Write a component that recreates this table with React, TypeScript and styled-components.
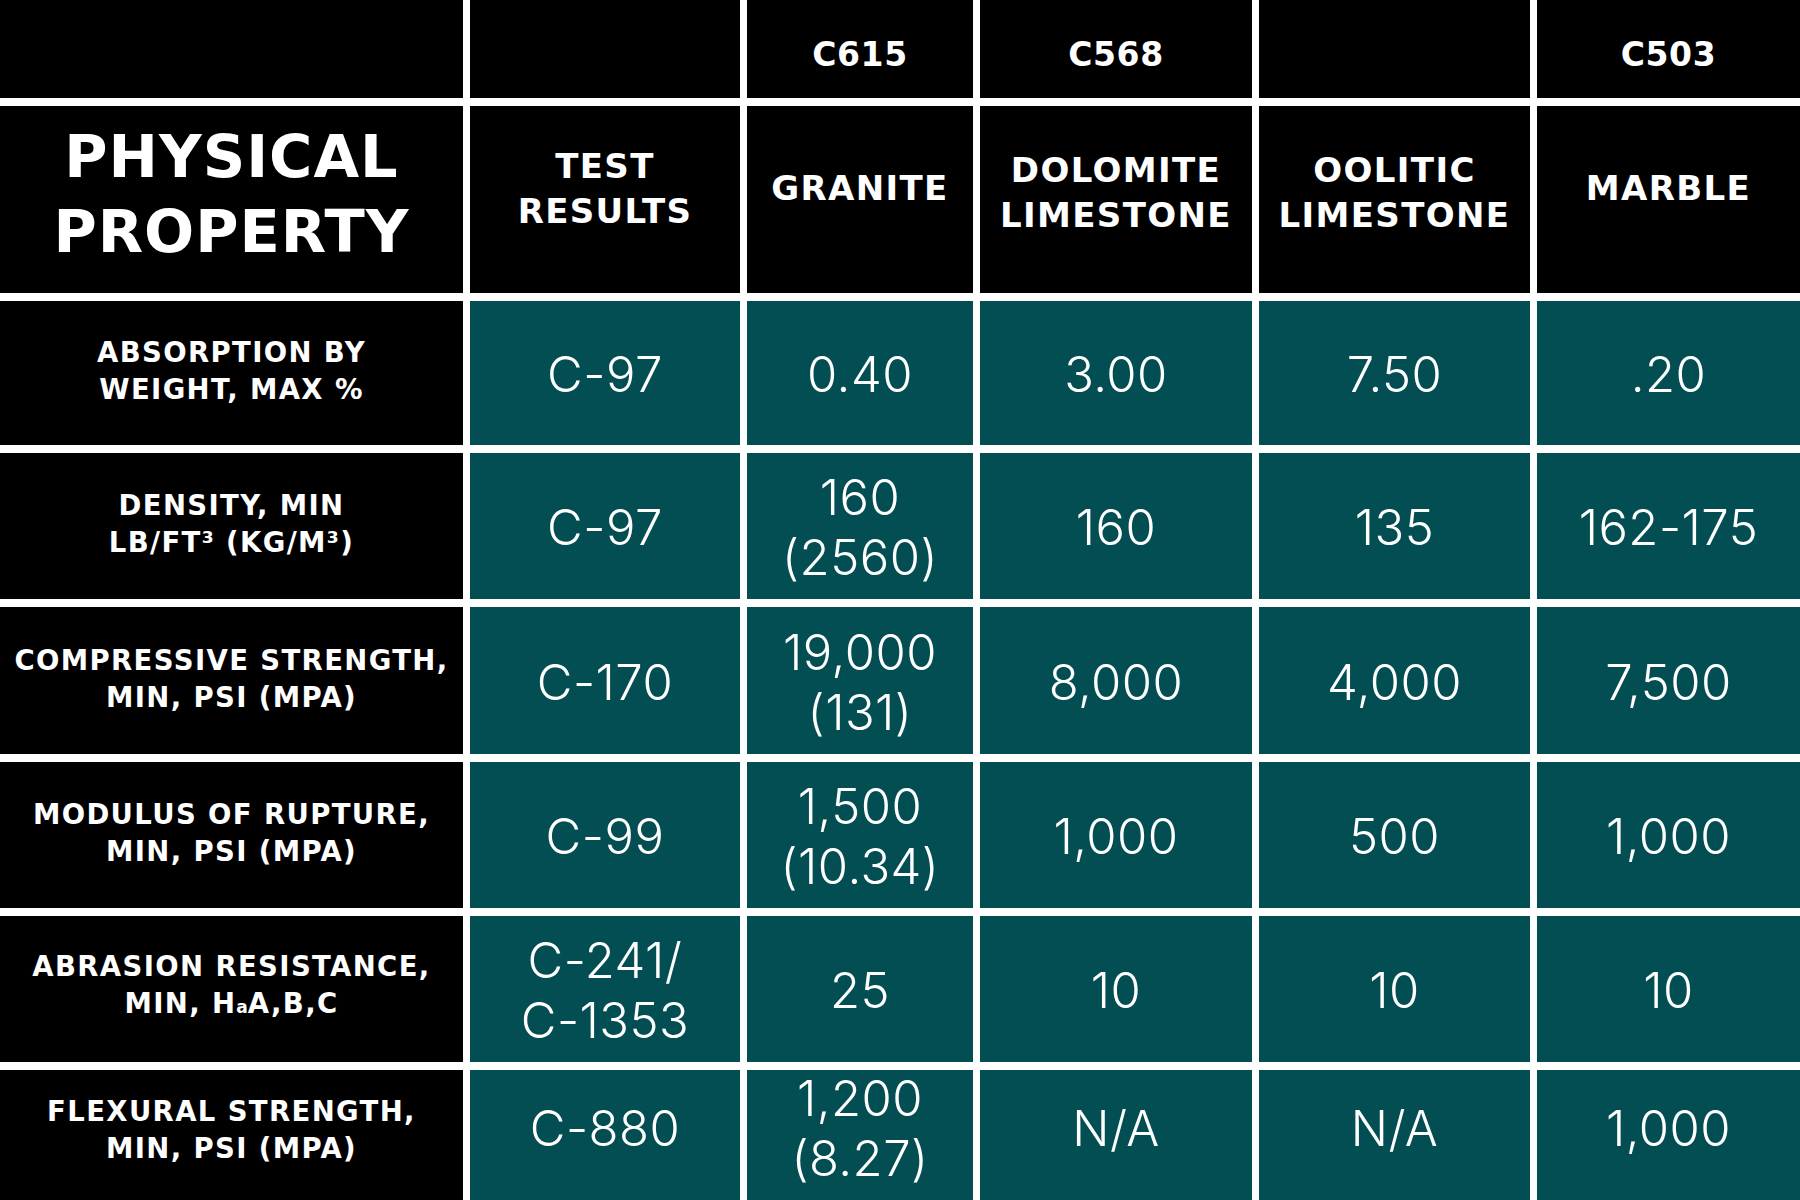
import React from 'react';
import styled, { createGlobalStyle } from 'styled-components';

const GlobalStyle = createGlobalStyle`
  html, body {
    margin: 0;
    padding: 0;
    background: #ffffff;
    overflow: hidden;
  }
`;

const TEAL = '#034e53';

const Page = styled.div`
  width: 1800px;
  height: 1200px;
  overflow: hidden;
  background: #ffffff;
`;

const Grid = styled.div`
  display: grid;
  grid-template-columns: 463px 270px 226px 272px 271px 263px;
  grid-template-rows: 98px 187px 144px 146px 147px 146px 146px 131px;
  column-gap: 7px;
  row-gap: 8px;
`;

const Cell = styled.div<{ $teal?: boolean }>`
  display: flex;
  align-items: center;
  justify-content: center;
  text-align: center;
  color: #ffffff;
  background: ${(p) => (p.$teal ? TEAL : '#000000')};
`;

const Text = styled.span`
  display: block;
`;

const CodeCell = styled(Cell)`
  font-family: "DejaVu Sans", "Liberation Sans", sans-serif;
  font-weight: 700;
  font-size: 33px;
  letter-spacing: 0.02em;
  padding-top: 10px;
`;

const HeadCell = styled(Cell)<{ $big?: boolean; $lines?: number }>`
  font-family: "DejaVu Sans", "Liberation Sans", sans-serif;
  font-weight: 700;
  font-size: ${(p) => (p.$big ? '59px' : '34px')};
  line-height: ${(p) => (p.$big ? '75px' : '45px')};
  letter-spacing: ${(p) => (p.$big ? '1px' : '0.04em')};
  padding-bottom: ${(p) => (p.$big ? '12px' : p.$lines === 2 ? '14px' : '22px')};
`;

const LabelCell = styled(Cell)<{ $last?: boolean }>`
  font-family: "DejaVu Sans", "Liberation Sans", sans-serif;
  font-weight: 700;
  font-size: 27.5px;
  line-height: 37px;
  letter-spacing: 0.05em;
  padding: 0 4px ${(p) => (p.$last ? '12px' : '4px')};
`;

const ValueCell = styled(Cell)<{ $last?: boolean }>`
  font-family: Inter, "Open Sans", sans-serif;
  font-weight: 300;
  font-size: 49px;
  line-height: 60px;
  letter-spacing: 0.01em;
  padding: ${(p) => (p.$last ? '0 0 14px' : '4px 0 0')};
`;

const Sub = styled.span`
  font-size: 0.62em;
  letter-spacing: 0;
`;

const codes = ['', '', 'C615', 'C568', '', 'C503'];
const materials: { name: React.ReactNode; lines: number }[] = [
  { name: <>GRANITE</>, lines: 1 },
  { name: <>DOLOMITE<br />LIMESTONE</>, lines: 2 },
  { name: <>OOLITIC<br />LIMESTONE</>, lines: 2 },
  { name: <>MARBLE</>, lines: 1 },
];

type Row = { label: React.ReactNode; test: React.ReactNode; values: React.ReactNode[] };

const rows: Row[] = [
  {
    label: <>ABSORPTION BY<br />WEIGHT, MAX %</>,
    test: 'C-97',
    values: ['0.40', '3.00', '7.50', '.20'],
  },
  {
    label: <>DENSITY, MIN<br />LB/FT³ (KG/M³)</>,
    test: 'C-97',
    values: [<>160<br />(2560)</>, '160', '135', '162-175'],
  },
  {
    label: <>COMPRESSIVE STRENGTH,<br />MIN, PSI (MPA)</>,
    test: 'C-170',
    values: [<>19,000<br />(131)</>, '8,000', '4,000', '7,500'],
  },
  {
    label: <>MODULUS OF RUPTURE,<br />MIN, PSI (MPA)</>,
    test: 'C-99',
    values: [<>1,500<br />(10.34)</>, '1,000', '500', '1,000'],
  },
  {
    label: <>ABRASION RESISTANCE,<br />MIN, H<Sub>a</Sub>A,B,C</>,
    test: <>C-241/<br />C-1353</>,
    values: ['25', '10', '10', '10'],
  },
  {
    label: <>FLEXURAL STRENGTH,<br />MIN, PSI (MPA)</>,
    test: 'C-880',
    values: [<>1,200<br />(8.27)</>, 'N/A', 'N/A', '1,000'],
  },
];

export default function App() {
  return (
    <Page>
      <GlobalStyle />
      <Grid>
        {codes.map((c, i) => (
          <CodeCell key={'code' + i}>
            <Text>{c}</Text>
          </CodeCell>
        ))}

        <HeadCell $big>
          <Text>PHYSICAL<br />PROPERTY</Text>
        </HeadCell>
        <HeadCell>
          <Text>TEST<br />RESULTS</Text>
        </HeadCell>
        {materials.map((m, i) => (
          <HeadCell key={'mat' + i} $lines={m.lines}>
            <Text>{m.name}</Text>
          </HeadCell>
        ))}

        {rows.map((r, i) => {
          const last = i === rows.length - 1;
          return (
            <React.Fragment key={'row' + i}>
              <LabelCell $last={last}>
                <Text>{r.label}</Text>
              </LabelCell>
              <ValueCell $teal $last={last}>
                <Text>{r.test}</Text>
              </ValueCell>
              {r.values.map((v, j) => (
                <ValueCell $teal $last={last} key={j}>
                  <Text>{v}</Text>
                </ValueCell>
              ))}
            </React.Fragment>
          );
        })}
      </Grid>
    </Page>
  );
}
